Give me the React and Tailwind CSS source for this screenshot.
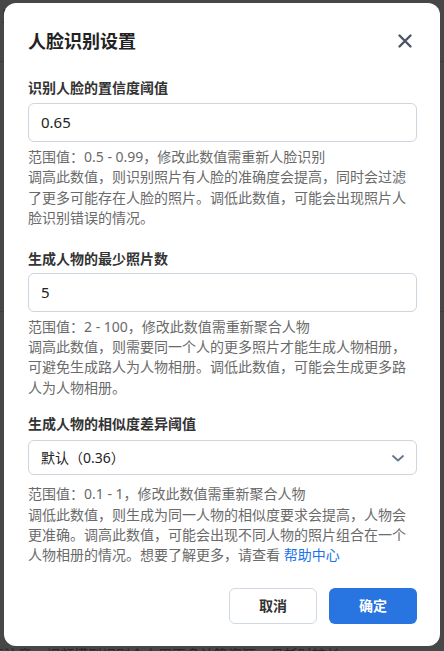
import React from "react";

const font = { fontFamily: '"Noto Sans", "Noto Sans CJK SC", sans-serif' };

function Field({ label, children, help, className = "", helpGap = "mt-[5px]" }) {
  return (
    <div className={className}>
      <div className="text-[14px] font-bold leading-[20px] text-[#333]">{label}</div>
      {children}
      <div className={`${helpGap} text-[14px] leading-[20.4px] text-[#6a6a6a]`}>{help}</div>
    </div>
  );
}

export default function App() {
  return (
    <div className="relative h-[651px] w-[444px] overflow-hidden bg-[#474747]" style={font}>
      {/* page behind the dialog */}
      <div className="flex h-full flex-col text-[14px] text-[#262626]">
        <div className="h-[62px] border-b border-[#3c3c3c] px-[2px] pt-[6px] leading-[20px]">置</div>
        <div className="h-[250px] border-b border-[#3c3c3c]"></div>
        <div className="flex-1"></div>
        <div className="h-[6px] overflow-visible whitespace-nowrap leading-[20px]">
          <div className="-ml-[10px] pt-[0px]">请注意，视频模型识别会占用更多计算资源，且耗时较长。</div>
        </div>
      </div>

      {/* dialog */}
      <div className="absolute left-[4px] top-[3px] flex h-[643px] w-[436px] flex-col rounded-[12px] bg-white pl-[24px] pr-[23px] pt-[24px]">
        <div className="flex h-[28px] items-center justify-between">
          <div className="text-[18px] font-bold leading-[28px] text-[#222]">人脸识别设置</div>
          <button className="flex h-[24px] w-[24px] items-center justify-center">
            <svg width="24" height="24" viewBox="0 0 24 24" fill="none">
              <path d="M6.5 6.5L17.5 17.5M17.5 6.5L6.5 17.5" stroke="#4b5563" strokeWidth="2.4" strokeLinecap="round" />
            </svg>
          </button>
        </div>

        <Field
          className="mt-[23px]"
          label="识别人脸的置信度阈值"
          help={
            <>
              <div>范围值：0.5 - 0.99，修改此数值需重新人脸识别</div>
              <div>调高此数值，则识别照片有人脸的准确度会提高，同时会过滤了更多可能存在人脸的照片。调低此数值，可能会出现照片人脸识别错误的情况。</div>
            </>
          }
        >
          <div className="mt-[5px] flex h-[39px] items-center rounded-[6px] border border-[#cdd5df] px-[12px] text-[15px] text-[#222]">
            0.65
          </div>
        </Field>

        <Field
          className="mt-[20px]"
          label="生成人物的最少照片数"
          help={
            <>
              <div>范围值：2 - 100，修改此数值需重新聚合人物</div>
              <div>调高此数值，则需要同一个人的更多照片才能生成人物相册，可避免生成路人为人物相册。调低此数值，可能会生成更多路人为人物相册。</div>
            </>
          }
        >
          <div className="mt-[4px] flex h-[39px] items-center rounded-[6px] border border-[#cdd5df] px-[12px] text-[15px] text-[#222]">
            5
          </div>
        </Field>

        <Field
          className="mt-[16px]"
          label="生成人物的相似度差异阈值"
          helpGap="mt-[9px]"
          help={
            <>
              <div>范围值：0.1 - 1，修改此数值需重新聚合人物</div>
              <div>
                调低此数值，则生成为同一人物的相似度要求会提高，人物会更准确。调高此数值，可能会出现不同人物的照片组合在一个人物相册的情况。想要了解更多，请查看{" "}
                <span className="text-[#1a73e8]">帮助中心</span>
              </div>
            </>
          }
        >
          <div className="mt-[6px] flex h-[35px] items-center justify-between rounded-[6px] border border-[#cdd5df] pl-[12px] pr-[10px] text-[14px] text-[#222]">
            <span>默认（0.36）</span>
            <svg width="16" height="16" viewBox="0 0 16 16" fill="none">
              <path d="M3 6L8 10.5L13 6" stroke="#64748b" strokeWidth="1.8" strokeLinecap="round" strokeLinejoin="round" />
            </svg>
          </div>
        </Field>

        <div className="mt-[22px] flex justify-end gap-[12px]">
          <button className="flex h-[36px] w-[88px] items-center justify-center rounded-[6px] border border-[#cfd8e3] bg-white text-[14px] font-bold text-[#333]">
            取消
          </button>
          <button className="flex h-[36px] w-[88px] items-center justify-center rounded-[6px] bg-[#2874e0] text-[14px] font-bold text-white">
            确定
          </button>
        </div>
      </div>
    </div>
  );
}
